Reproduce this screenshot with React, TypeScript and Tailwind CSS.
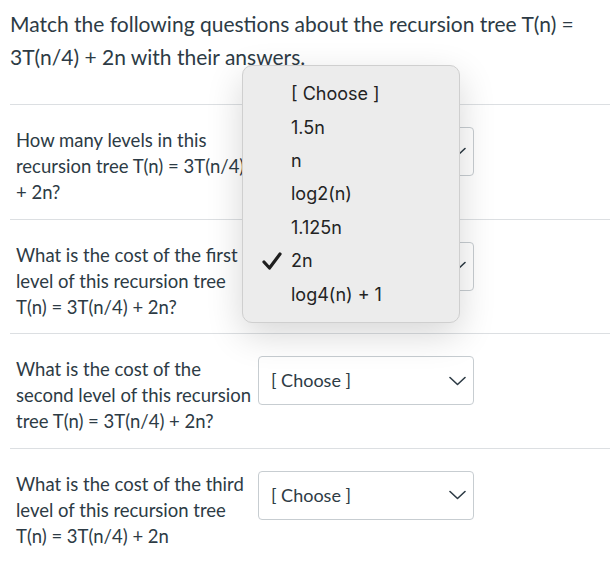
import React from "react";

const questions = [
  "How many levels in this recursion tree T(n) = 3T(n/4) + 2n?",
  "What is the cost of the first level of this recursion tree T(n) = 3T(n/4) + 2n?",
  "What is the cost of the second level of this recursion tree T(n) = 3T(n/4) + 2n?",
  "What is the cost of the third level of this recursion tree T(n) = 3T(n/4) + 2n",
];

const options = ["[ Choose ]", "1.5n", "n", "log2(n)", "1.125n", "2n", "log4(n) + 1"];

function Chevron() {
  return (
    <svg width="17" height="10" viewBox="0 0 17 10" fill="none">
      <path d="M1 1.5 L8.5 8.5 L16 1.5" stroke="#2d3b45" strokeWidth="1.6" strokeLinecap="round" strokeLinejoin="round" />
    </svg>
  );
}

function Select() {
  return (
    <div className="flex h-[49px] w-[216px] shrink-0 items-center justify-between rounded-[4px] border border-[#c7cdd1] bg-white pl-[12px] pr-[7px]">
      <span className="text-[18px] text-[#2d3b45]">[ Choose ]</span>
      <Chevron />
    </div>
  );
}

export default function App() {
  return (
    <div className="relative min-h-[562px] w-[610px] overflow-hidden bg-white font-['Lato',sans-serif] text-[#2d3b45]">
      <div className="pl-[10px]">
        <p className="w-[590px] pt-[7px] text-[21px] leading-[33px]">
          Match the following questions about the recursion tree T(n) = 3T(n/4) + 2n with their answers.
        </p>

        <div className="mt-[31px]">
          {questions.map((q) => (
            <div key={q} className="flex items-start border-t border-[#dcdfe2] pb-[13.5px] pl-[6px] pt-[22px]">
              <p className="w-[240px] shrink-0 text-[18.5px] leading-[26px]">{q}</p>
              <div className="ml-[2px]">
                <Select />
              </div>
            </div>
          ))}
        </div>
      </div>

      {/* open dropdown menu */}
      <div className="absolute left-[242px] top-[65px] flex h-[258px] w-[218px] flex-col rounded-[10px] border border-[#cfcfcf] bg-[#ececec] py-[11px] font-['Inter',sans-serif] shadow-[0_12px_36px_rgba(0,0,0,0.16)]">
        {options.map((o) => (
          <div key={o} className="flex h-[34px] items-center text-[18px] text-[#232323]">
            <span className="flex w-[48px] justify-end pr-[9px]">
              {o === "2n" && (
                <svg width="20" height="18" viewBox="0 0 20 18" fill="none">
                  <path d="M2 10 L7.5 16 L18 2" stroke="#1e1e1e" strokeWidth="3.2" strokeLinecap="round" strokeLinejoin="round" />
                </svg>
              )}
            </span>
            <span>{o}</span>
          </div>
        ))}
      </div>
    </div>
  );
}
